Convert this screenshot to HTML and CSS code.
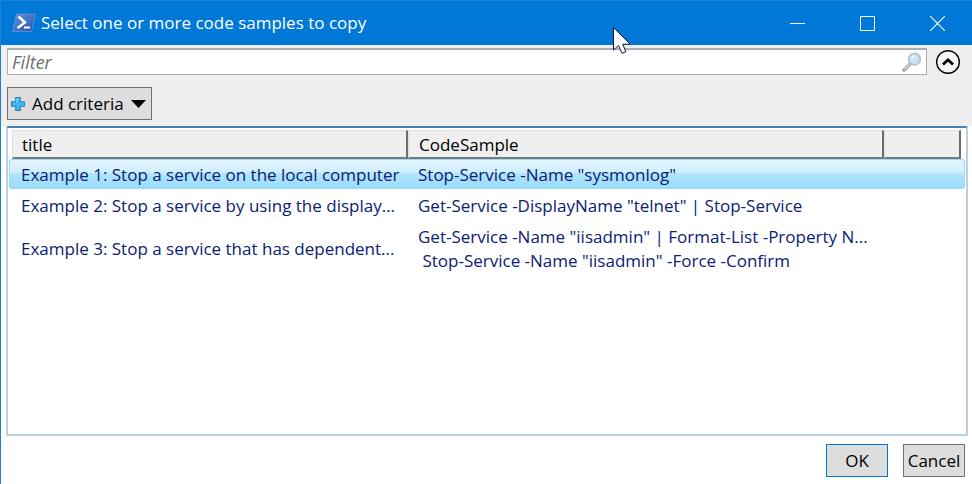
FILE: index.html
```html
<!DOCTYPE html>
<html lang="en">

<head>
    <meta charset="UTF-8">
    <meta name="viewport" content="width=device-width, initial-scale=1.0">
    <title>Select one or more code samples to copy</title>
    <link rel="stylesheet" href="styles.css">
</head>

<body>
    <header class="title-bar">
        <svg class="app-icon" width="24" height="20" viewBox="0 0 24 20">
            <defs>
                <linearGradient id="ps" x1="0" y1="0" x2="1" y2="1">
                    <stop offset="0" stop-color="#5c93e4"/>
                    <stop offset="1" stop-color="#2a52ac"/>
                </linearGradient>
            </defs>
            <path d="M4.5 1H23.5L19.5 18.5H.5Z" fill="url(#ps)" stroke="#7f9fdc" stroke-width=".6"/>
            <path d="M6.5 3.5L13 9.5L5.5 15" fill="none" stroke="#fff" stroke-width="2.4"/>
            <path d="M12 14.5H18" stroke="#fff" stroke-width="2"/>
        </svg>
        <h1>Select one or more code samples to copy</h1>
        <div class="window-buttons">
            <button type="button" aria-label="Minimize">
                <svg width="15" height="15" viewBox="0 0 15 15"><path d="M0 7.5H15" stroke="#fff"/></svg>
            </button>
            <button type="button" aria-label="Maximize">
                <svg width="15" height="15" viewBox="0 0 15 15"><path d="M.5 .5H14.5V14.5H.5Z" fill="none" stroke="#fff"/></svg>
            </button>
            <button type="button" aria-label="Close">
                <svg width="15" height="15" viewBox="0 0 15 15"><path d="M0 0L15 15M15 0L0 15" stroke="#fff" stroke-width="1.1"/></svg>
            </button>
        </div>
        <svg class="cursor" width="19" height="28" viewBox="0 0 19 28">
            <path d="M.5 .5V23L5.5 18.5L9 26.3L12.8 24.7L9.8 17.2H17.2Z" fill="#fff" stroke="#101840"/>
        </svg>
    </header>

    <section class="toolbar">
        <div class="filter-row">
            <div class="filter-box">
                <input type="text" placeholder="Filter" aria-label="Filter">
                <svg width="20" height="20" viewBox="0 0 20 20">
                    <path d="M2 18L8 12" stroke="#a9a9a9" stroke-width="3.6" stroke-linecap="round"/>
                    <path d="M2.5 17L7.5 12" stroke="#dcdcdc" stroke-width="1.2"/>
                    <circle cx="12.5" cy="7.2" r="5.8" fill="#c5e3fb" stroke="#b9bcc6" stroke-width="1.6"/>
                    <path d="M9 7A3.8 3.8 0 0 1 13 3.4Q13 6 9 7Z" fill="#eef8ff"/>
                </svg>
            </div>
            <button type="button" class="collapse" aria-label="Collapse criteria">
                <svg width="26" height="26" viewBox="0 0 26 26">
                    <circle cx="13" cy="13" r="11.3" fill="#f4f4f4" stroke="#000" stroke-width="1.4"/>
                    <path d="M8 15.5L13 10.8L18 15.5" fill="none" stroke="#000" stroke-width="2.8"/>
                </svg>
            </button>
        </div>
        <button type="button" class="add-criteria">
            <svg width="14" height="14" viewBox="0 0 14 14">
                <path d="M4.7 .6H9.3V4.7H13.4V9.3H9.3V13.4H4.7V9.3H.6V4.7H4.7Z" fill="#3db8f5" stroke="#3181bd" stroke-width="1.1"/>
                <path d="M5.8 5.5V2H8" fill="none" stroke="#8edcff" stroke-width="1"/>
            </svg>
            <span>Add criteria</span>
            <svg width="15" height="8" viewBox="0 0 15 8"><path d="M0 0H15L7.5 8Z"/></svg>
        </button>
    </section>

    <main class="results">
        <table>
            <colgroup>
                <col class="col-title">
                <col class="col-code">
                <col>
            </colgroup>
            <thead>
                <tr>
                    <th><span>title</span></th>
                    <th><span>CodeSample</span></th>
                    <th><span></span></th>
                </tr>
            </thead>
            <tbody>
                <tr class="selected">
                    <td>Example 1: Stop a service on the local computer</td>
                    <td>Stop-Service -Name "sysmonlog"</td>
                    <td></td>
                </tr>
                <tr>
                    <td>Example 2: Stop a service by using the display...</td>
                    <td>Get-Service -DisplayName "telnet" | Stop-Service</td>
                    <td></td>
                </tr>
                <tr>
                    <td>Example 3: Stop a service that has dependent...</td>
                    <td>Get-Service -Name "iisadmin" | Format-List -Property N...
 Stop-Service -Name "iisadmin" -Force -Confirm</td>
                    <td></td>
                </tr>
            </tbody>
        </table>
    </main>

    <footer class="actions">
        <button type="button" class="default">OK</button>
        <button type="button">Cancel</button>
    </footer>
</body>

</html>
```
FILE: styles.css
```css
*, *::before, *::after {
    box-sizing: border-box;
}

:root {
    --accent: #0078d7;
    --panel: #efefef;
    --button-bg: #dddddd;
    --button-border: #707070;
    --row-text: #0c2074;
}

body {
    display: flex;
    flex-direction: column;
    min-height: 100vh;
    margin: 0;
    border-left: 1px solid #1883d7;
    background: #fff;
    color: #000;
    font-family: "Open Sans", "Noto Sans", sans-serif;
    font-size: 17px;
    line-height: 24px;
}

button,
input {
    font: inherit;
    color: inherit;
}

svg {
    display: block;
    flex: none;
}

/* Title bar */
.title-bar {
    position: relative;
    display: flex;
    align-items: center;
    height: 45px;
    padding-left: 11px;
    border-top: 1px solid #1883d7;
    background: var(--accent);
    color: #fff;
}

.title-bar h1 {
    flex: 1;
    margin: 0 0 0 5px;
    font-size: 17px;
    font-weight: 400;
}

.window-buttons {
    display: flex;
}

.window-buttons button {
    display: flex;
    align-items: center;
    justify-content: center;
    width: 70px;
    height: 44px;
    padding: 0;
    border: none;
    background: none;
}

.cursor {
    position: absolute;
    left: 612px;
    top: 26px;
    z-index: 1;
}

/* Filter and criteria */
.toolbar {
    padding: 3px 11px 6px 6px;
    background: var(--panel);
}

.filter-row {
    display: flex;
    align-items: center;
    gap: 8px;
}

.filter-box {
    display: flex;
    flex: 1;
    align-items: center;
    height: 27px;
    padding: 0 4px;
    border: 1px solid #abadb3;
    border-top-width: 2px;
    background: #fff;
}

.filter-box input {
    flex: 1;
    min-width: 0;
    padding: 0;
    border: none;
    outline: none;
    background: none;
    font-size: 18px;
}

.filter-box input::placeholder {
    color: #6d6d6d;
    font-style: italic;
    opacity: 1;
}

.collapse {
    padding: 0;
    border: none;
    background: none;
}

.add-criteria {
    display: flex;
    align-items: center;
    gap: 7px;
    height: 33px;
    margin-top: 12px;
    padding: 0 5px 0 3px;
    border: 1px solid var(--button-border);
    background: var(--button-bg);
}

/* Results list */
.results {
    flex: 1;
    margin: 0 4px 0 5px;
    padding: 2px 1px;
    border: 2px solid #b9d1e0;
    border-top-color: #4580ae;
    border-radius: 2px;
}

table {
    width: 100%;
    table-layout: fixed;
    border-spacing: 0;
}

.col-title {
    width: 399px;
}

.col-code {
    width: 476px;
}

th {
    padding: 0;
    font-weight: 400;
    text-align: left;
}

th span {
    display: block;
    height: 29px;
    padding: 2px 10px 0;
    border: 1px solid #dfdfdf;
    border-right: 2px solid #6d6d6d;
    border-bottom: 2px solid #7a7a7a;
    background: var(--panel);
}

th:first-child span {
    margin-left: 3px;
    padding-left: 9px;
}

th:last-child span {
    margin-right: 4px;
}

td {
    height: 32px;
    padding: 4px 10px 3px 10px;
    overflow: hidden;
    color: var(--row-text);
    text-overflow: ellipsis;
    vertical-align: middle;
    white-space: pre;
}

td:first-child {
    padding-left: 12px;
    padding-right: 6px;
}

.selected td {
    height: 30px;
    padding-top: 3px;
    padding-bottom: 0;
    border: solid #98dcfa;
    border-width: 1px 0 2px;
    background: linear-gradient(#e2f5fe, #cdeefd 48%, #b3e5fc 50%, #9addfb);
}

.selected td:first-child {
    border-left-width: 1px;
    border-radius: 3px 0 0 3px;
    padding-left: 11px;
}

.selected td:last-child {
    border-right-width: 1px;
    border-radius: 0 3px 3px 0;
}

/* Dialog buttons */
.actions {
    display: flex;
    justify-content: flex-end;
    gap: 15px;
    padding: 8px 7px 7px;
}

.actions button {
    width: 62px;
    height: 33px;
    padding: 0;
    border: 1px solid var(--button-border);
    background: var(--button-bg);
}

.actions .default {
    border-color: var(--accent);
}
```
